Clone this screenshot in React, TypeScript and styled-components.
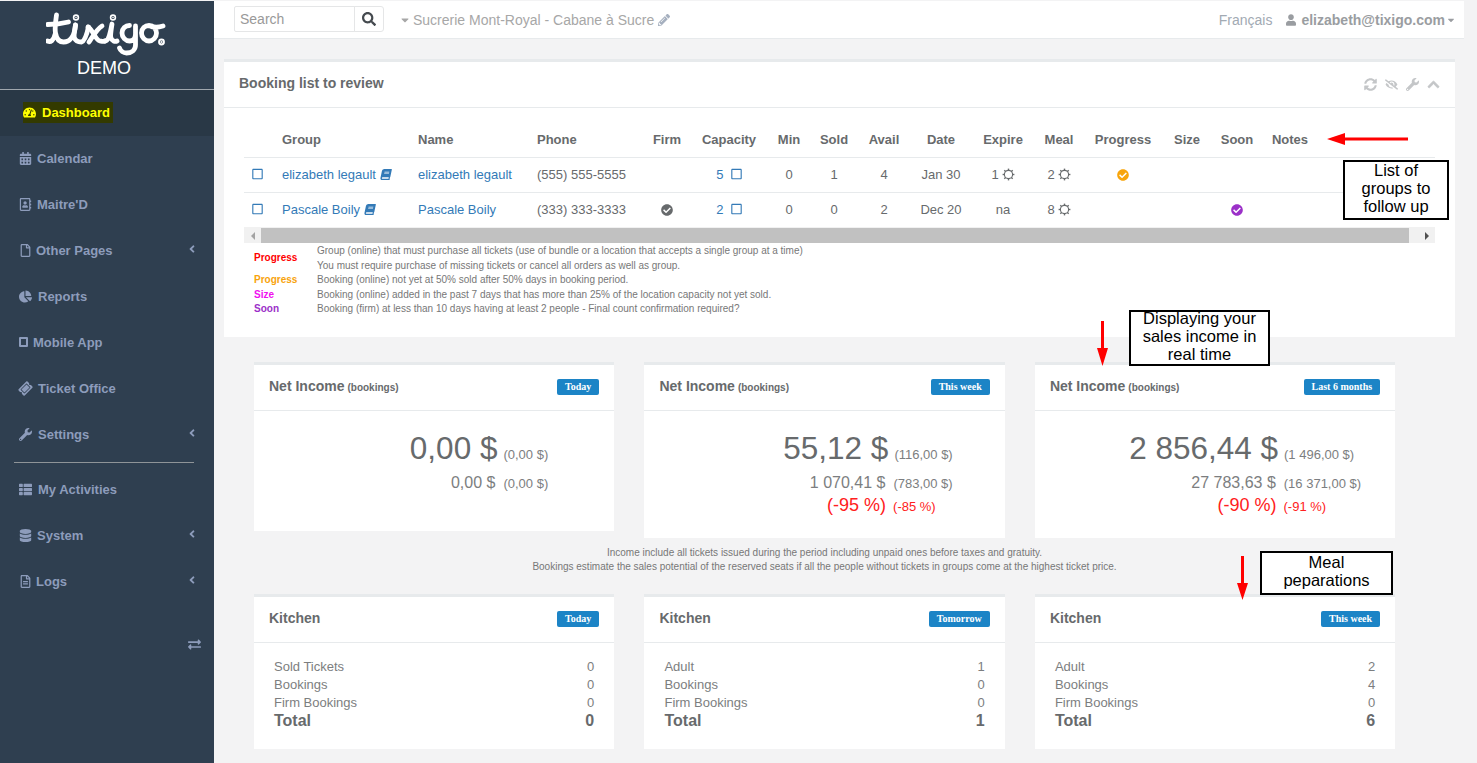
import React from 'react';
import styled, { createGlobalStyle } from 'styled-components';
import {
  FaTachometerAlt, FaCalendarAlt, FaRegAddressBook, FaRegFile, FaChartPie, FaRegSquare, FaTicketAlt, FaWrench,
  FaThList, FaDatabase, FaRegFileAlt, FaExchangeAlt, FaAngleLeft, FaSearch, FaCaretDown, FaPencilAlt, FaUser,
  FaSyncAlt, FaEyeSlash, FaChevronUp, FaBook, FaCheckCircle,
} from 'react-icons/fa';

const Global = createGlobalStyle`
  html, body { margin: 0; padding: 0; height: 763px; overflow: hidden; background: #f3f3f4; }
  body { font-family: "Liberation Sans", Arial, sans-serif; font-size: 13px; color: #676a6c; }
  * { box-sizing: border-box; }
`;

const Page = styled.div`
  position: relative;
  display: flex;
  width: 1477px;
  height: 763px;
  overflow: hidden;
  padding-top: 1px;
`;

const Sidebar = styled.nav`
  width: 214px;
  flex: none;
  background: #2f3f50;
  display: flex;
  flex-direction: column;
`;

const Brand = styled.div`
  height: 89px;
  display: flex;
  flex-direction: column;
  align-items: center;
  color: #fff;
  border-bottom: 1px solid #a0a7ae;
`;

const Logo = styled.svg`
  width: 124px;
  height: 46px;
  margin: 11px 0 0 1px;
  display: block;
`;

const DemoText = styled.div`
  font-size: 18px;
  line-height: 18px;
  margin: 1px 6px 0 0;
`;

const ActiveItem = styled.div`
  height: 46px;
  background: #293846;
  display: flex;
  align-items: center;
  padding: 0 0 2px 23px;
`;

const Highlight = styled.span`
  display: flex;
  align-items: center;
  gap: 6px;
  height: 21px;
  padding: 0 3px 0 0;
  background: #333a00;
  color: #ffff00;
  font-weight: 700;
  font-size: 13px;
  svg { width: 13px; height: 13px; }
`;

const NavItem = styled.div`
  height: 46px;
  display: flex;
  align-items: center;
  padding: 0 19px 2px;
  color: #8d9cbb;
  font-weight: 700;
  font-size: 13px;
  flex: none;
`;

const NavIcon = styled.span<{ $w: number }>`
  width: ${(p) => p.$w}px;
  flex: none;
  display: flex;
  align-items: center;
  svg { width: 13px; height: 13px; }
`;

const MobileIcon = styled.span`
  display: block;
  width: 9px;
  height: 10px;
  border: 2px solid #8d9cbb;
  border-radius: 1px;
`;

const TicketIcon = styled(FaTicketAlt)`
  transform: rotate(-45deg);
`;

const Chevron = styled(FaAngleLeft)`
  margin-left: auto;
  width: 12px;
  height: 12px;
  margin-top: -2px;
  margin-right: -3px;
`;

const NavRule = styled.div`
  height: 1px;
  margin: 4px 20px 4px 14px;
  background: #8f9498;
`;

const Toggle = styled.div`
  margin-top: 33px;
  padding-right: 13px;
  display: flex;
  justify-content: flex-end;
  color: #8d9cbb;
  svg { width: 13px; height: 13px; }
`;

const Main = styled.main`
  flex: none;
  width: 1250px;
  display: flex;
  flex-direction: column;
`;

const TopBar = styled.header`
  height: 38px;
  background: #fff;
  border-bottom: 1px solid #e7eaec;
  display: flex;
  align-items: center;
  padding: 0 9px 0 20px;
  flex: none;
`;

const SearchInput = styled.div`
  width: 121px;
  height: 26px;
  border: 1px solid #e5e6e7;
  border-radius: 2px 0 0 2px;
  color: #999;
  font-size: 14px;
  line-height: 24px;
  padding-left: 5px;
  margin-top: -1px;
`;

const SearchButton = styled.div`
  width: 30px;
  height: 26px;
  margin-left: -1px;
  border: 1px solid #e5e6e7;
  border-radius: 0 3px 3px 0;
  display: flex;
  align-items: center;
  justify-content: center;
  color: #454a4f;
  margin-top: -1px;
  svg { width: 14px; height: 14px; }
`;

const Venue = styled.div`
  margin-left: 16px;
  display: flex;
  align-items: center;
  color: #a7a7a7;
  font-size: 14px;
  svg { color: #a7a7a7; }
`;

const VenueCaret = styled(FaCaretDown)`
  width: 10px;
  height: 12px;
  margin-right: 3px;
`;

const VenuePencil = styled(FaPencilAlt)`
  width: 12px;
  height: 12px;
  margin-left: 4px;
  color: #a6b0bf !important;
`;

const RightTools = styled.div`
  margin-left: auto;
  display: flex;
  align-items: center;
  font-size: 14px;
  color: #a2aab3;
`;

const UserName = styled.span`
  display: flex;
  align-items: center;
  margin-left: 14px;
  color: #9a9da1;
  font-weight: 700;
  svg { width: 10px; height: 12px; margin-right: 5px; }
`;

const UserCaret = styled(FaCaretDown)`
  width: 8px !important;
  height: 10px !important;
  margin: 0 0 0 2px !important;
`;

const Content = styled.div`
  flex: 1;
  padding: 20px 9px 0 10px;
  display: flex;
  flex-direction: column;
`;

const Panel = styled.section`
  width: 1231px;
  height: 278px;
  background: #fff;
  border-top: 3px solid #e7eaec;
  flex: none;
`;

const PanelHead = styled.div`
  height: 46px;
  border-bottom: 1px solid #e7eaec;
  display: flex;
  align-items: center;
  justify-content: space-between;
  padding: 0 15px;
`;

const PanelTitle = styled.h5`
  margin: -4px 0 0;
  font-size: 14px;
  font-weight: 700;
  color: #676a6c;
  letter-spacing: 0;
`;

const PanelTools = styled.div`
  display: flex;
  align-items: center;
  gap: 8px;
  color: #c4c6c8;
  svg { width: 13px; height: 13px; }
`;

const CollapseIcon = styled(FaChevronUp)`
  stroke: currentColor;
  stroke-width: 30;
`;

const TableArea = styled.div`
  margin: 14px 20px 0;
`;

const Table = styled.table`
  border-collapse: collapse;
  table-layout: fixed;
  width: 1191px;
  font-size: 13px;
  th {
    height: 35px;
    font-weight: 700;
    font-size: 13px;
    color: #676a6c;
    text-align: center;
    padding: 0;
    border-bottom: 1px solid #e7eaec;
  }
  td {
    height: 35px;
    padding: 0;
    text-align: center;
    color: #676a6c;
    border-bottom: 1px solid #e7eaec;
    white-space: nowrap;
  }
  tr:last-child td { border-bottom: 0; }
`;

const LeftTh = styled.th`
  && { text-align: left; padding-left: 8px; }
`;
const LeftTd = styled.td`
  && { text-align: left; padding-left: 8px; }
`;
const BoxTd = styled.td`
  && { padding-right: 4px; }
`;

const Link = styled.a`
  color: #337ab7;
`;

const BookIcon = styled(FaBook)`
  width: 12px;
  height: 11px;
  margin-left: 4px;
  vertical-align: -1px;
  color: #337ab7;
  transform: skewX(-12deg);
`;

const CheckBox = styled(FaRegSquare)`
  width: 11px;
  height: 12px;
  color: #337ab7;
  vertical-align: -1px;
`;

const SunSvg = styled.svg`
  width: 13px;
  height: 13px;
  vertical-align: -2px;
  margin-left: 3px;
  color: #676a6c;
`;

function Sun() {
  const teeth = [0, 45, 90, 135, 180, 225, 270, 315];
  return (
    <SunSvg viewBox="0 0 13 13" fill="none" stroke="currentColor">
      <circle cx="6.5" cy="6.5" r="4.1" strokeWidth="1.1" />
      {teeth.map((a) => <path key={a} d="M6.5 0.6v1.8" strokeWidth="1.4" transform={`rotate(${a} 6.5 6.5)`} />)}
    </SunSvg>
  );
}

const CheckDot = styled(FaCheckCircle)<{ $c: string }>`
  width: 12px;
  height: 12px;
  vertical-align: -2px;
  color: ${(p) => p.$c};
`;

const ScrollBar = styled.div`
  height: 16px;
  background: #f1f1f1;
  display: flex;
  align-items: stretch;
  padding-top: 1px;
`;

const ScrollArrow = styled.span<{ $dir: 'l' | 'r' }>`
  width: 17px;
  flex: none;
  display: flex;
  align-items: center;
  justify-content: center;
  &::before {
    content: '';
    border-top: 4px solid transparent;
    border-bottom: 4px solid transparent;
    ${(p) => (p.$dir === 'l' ? 'border-right: 4px solid #a3a3a3;' : 'border-left: 4px solid #505050;')}
  }
`;

const ScrollThumb = styled.div`
  flex: 1;
  margin-right: 9px;
  background: #c1c1c1;
`;

const Legend = styled.div`
  display: grid;
  grid-template-columns: 63px 1fr;
  margin: 1px 20px 0 30px;
  font-size: 10px;
  line-height: 14.5px;
  color: #777;
`;

const LegendKey = styled.div<{ $c: string; $span?: number }>`
  color: ${(p) => p.$c};
  font-weight: 700;
  ${(p) => (p.$span ? `grid-row: span ${p.$span}; align-self: center;` : '')}
`;

const CardRow = styled.div<{ $top?: number }>`
  display: grid;
  grid-template-columns: repeat(3, 360.25px);
  column-gap: 30.2px;
  align-items: start;
  margin: ${(p) => p.$top ?? 0}px 0 0 30px;
`;

const Card = styled.article<{ $h: number }>`
  height: ${(p) => p.$h}px;
  background: #fff;
  border-top: 3px solid #e7eaec;
`;

const CardHead = styled.div`
  height: 46px;
  border-bottom: 1px solid #e7eaec;
  display: flex;
  align-items: center;
  justify-content: space-between;
  padding: 0 15px;
`;

const CardTitle = styled.h5`
  margin: -3px 0 0;
  font-size: 14px;
  font-weight: 700;
  color: #676a6c;
`;

const CardSub = styled.small`
  font-size: 10px;
  font-weight: 700;
  margin-left: 3px;
`;

const Badge = styled.span`
  font-family: "Liberation Serif", "Times New Roman", serif;
  font-size: 10px;
  font-weight: 700;
  color: #fff;
  background: #1c84c6;
  border-radius: 2px;
  height: 16px;
  line-height: 16px;
  padding: 0 8px;
  margin-top: -1px;
`;

const Figures = styled.div`
  display: grid;
  justify-items: end;
  padding-top: 18px;
`;

const Line = styled.div<{ $right: number; $top?: number }>`
  display: flex;
  align-items: baseline;
  margin: ${(p) => p.$top ?? 0}px ${(p) => p.$right}px 0 0;
  white-space: nowrap;
`;

const Big = styled.span`
  font-size: 31.5px;
  line-height: 38px;
  color: #676a6c;
`;

const Mid = styled.span`
  font-size: 16px;
  line-height: 26px;
  color: #7c7e80;
`;

const RedMid = styled.span`
  font-size: 18px;
  line-height: 26px;
  color: #ff2020;
`;

const Paren = styled.span<{ $red?: boolean; $gap: number }>`
  font-size: 13px;
  margin-left: ${(p) => p.$gap}px;
  color: ${(p) => (p.$red ? '#ff2020' : '#7c7e80')};
`;

const Notice = styled.div`
  height: 56px;
  padding-top: 8px;
  text-align: center;
  font-size: 10px;
  line-height: 14px;
  color: #777;
  margin-left: 30px;
  width: 1141px;
`;

const KitchenBody = styled.div`
  padding: 15px 20px 0;
  font-size: 13px;
  line-height: 18px;
  color: #7c7e80;
`;

const KRow = styled.div`
  display: flex;
  justify-content: space-between;
`;

const KTotal = styled(KRow)`
  font-size: 16px;
  font-weight: 700;
  color: #676a6c;
`;

const Note = styled.div<{ $x: number; $y: number; $w: number; $h: number; $dy: number }>`
  position: absolute;
  left: ${(p) => p.$x}px;
  top: ${(p) => p.$y}px;
  width: ${(p) => p.$w}px;
  height: ${(p) => p.$h}px;
  border: 2px solid #000;
  background: #fff;
  color: #000;
  font-size: 16.5px;
  line-height: 18px;
  text-align: center;
  overflow: hidden;
  & > span { display: block; margin-top: ${(p) => p.$dy}px; }
`;

const Arrow = styled.svg<{ $x: number; $y: number }>`
  position: absolute;
  left: ${(p) => p.$x}px;
  top: ${(p) => p.$y}px;
`;

type Item = [React.ReactNode, number, string, boolean];

const items: Item[] = [
  [<FaCalendarAlt />, 18, 'Calendar', false],
  [<FaRegAddressBook />, 18, "Maitre'D", false],
  [<FaRegFile />, 17, 'Other Pages', true],
  [<FaChartPie />, 19, 'Reports', false],
  [<MobileIcon />, 14, 'Mobile App', false],
  [<TicketIcon />, 19, 'Ticket Office', false],
  [<FaWrench />, 19, 'Settings', true],
];
const items2: Item[] = [
  [<FaThList />, 19, 'My Activities', false],
  [<FaDatabase />, 18, 'System', true],
  [<FaRegFileAlt />, 17, 'Logs', true],
];

const cols = [30, 136, 119, 116, 44, 80, 40, 50, 50, 64, 60, 52, 76, 52, 48, 58, 116];
const heads = ['Firm', 'Capacity', 'Min', 'Sold', 'Avail', 'Date', 'Expire', 'Meal', 'Progress', 'Size', 'Soon', 'Notes'];

function NavRow({ it }: { it: Item }) {
  return (
    <NavItem>
      <NavIcon $w={it[1]}>{it[0]}</NavIcon>
      {it[2]}
      {it[3] && <Chevron />}
    </NavItem>
  );
}

function Income(props: { badge: string; h: number; big: string; bigP: string; mid: string; midP: string; red?: string; redP?: string; right: number; rightMid: number; rightRed?: number; }) {
  return (
    <Card $h={props.h}>
      <CardHead>
        <CardTitle>Net Income<CardSub>(bookings)</CardSub></CardTitle>
        <Badge>{props.badge}</Badge>
      </CardHead>
      <Figures>
        <Line $right={props.right}><Big>{props.big}</Big><Paren $gap={6}>{props.bigP}</Paren></Line>
        <Line $right={props.rightMid} $top={3}><Mid>{props.mid}</Mid><Paren $gap={8}>{props.midP}</Paren></Line>
        {props.red && <Line $right={props.rightRed ?? 0} $top={-4}><RedMid>{props.red}</RedMid><Paren $red $gap={7}>{props.redP}</Paren></Line>}
      </Figures>
    </Card>
  );
}

function Kitchen(props: { badge: string; first: string; vals: number[] }) {
  return (
    <Card $h={155}>
      <CardHead>
        <CardTitle>Kitchen</CardTitle>
        <Badge>{props.badge}</Badge>
      </CardHead>
      <KitchenBody>
        <KRow><span>{props.first}</span><span>{props.vals[0]}</span></KRow>
        <KRow><span>Bookings</span><span>{props.vals[1]}</span></KRow>
        <KRow><span>Firm Bookings</span><span>{props.vals[2]}</span></KRow>
        <KTotal><span>Total</span><span>{props.vals[3]}</span></KTotal>
      </KitchenBody>
    </Card>
  );
}

export default function App() {
  return (
    <Page>
      <Global />
      <Sidebar>
        <Brand>
          <Logo viewBox="0 0 124 46" fill="none" stroke="#fff" strokeWidth="4.8" strokeLinecap="round" strokeLinejoin="round">
            <path d="M1.5 29c3 1.5 6 0 8-8M10.5 3c-1 7-2 13-1 18 1 6 4 9 8 9 6 0 11-5 12-17" />
            <path d="M1.5 12.5c7 0 15-1 21-2.5" />
            <path d="M29.500 13c-1 6-2 11-1 13 1 3 4 4 7 4 3-1 5-6 7-15" />
            <path d="M42 15c4 1 7 13 12 14 1 0 3 1 5 0M56 14c-5 3-9 10-13 16" />
            <path d="M59 29c3 0 5-6 7-17-1 7-2 12-1 14 1 3 4 4 6 3" />
            <path d="M83.500 13.500c-4 0-7.500 3-7.500 7.500s3.500 8 7.500 8 6-3 6-7M89.500 14v19c0 5-4 8-9 8-3 0-6-2-7-5" />
            <path d="M103 13.500c-4 0-7.500 3-7.500 7.500s3.500 8 7.500 8 7.500-3.500 7.500-8c0-4-3-7.500-7.500-7.500 4 2 9 2 14 .5" />
            <circle cx="115.500" cy="30" r="1" fill="#fff" />
            <circle cx="30" cy="5.500" r="0.8" fill="#fff" />
            <circle cx="67" cy="5.500" r="0.8" fill="#fff" />
          </Logo>
          <DemoText>DEMO</DemoText>
        </Brand>
        <ActiveItem>
          <Highlight><FaTachometerAlt />Dashboard</Highlight>
        </ActiveItem>
        {items.map((it) => <NavRow key={it[2]} it={it} />)}
        <NavRule />
        {items2.map((it) => <NavRow key={it[2]} it={it} />)}
        <Toggle><FaExchangeAlt /></Toggle>
      </Sidebar>
      <Main>
        <TopBar>
          <SearchInput>Search</SearchInput>
          <SearchButton><FaSearch /></SearchButton>
          <Venue>
            <VenueCaret />
            Sucrerie Mont-Royal - Cabane à Sucre
            <VenuePencil />
          </Venue>
          <RightTools>
            Français
            <UserName><FaUser />elizabeth@tixigo.com<UserCaret /></UserName>
          </RightTools>
        </TopBar>
        <Content>
          <Panel>
            <PanelHead>
              <PanelTitle>Booking list to review</PanelTitle>
              <PanelTools><FaSyncAlt /><FaEyeSlash /><FaWrench /><CollapseIcon /></PanelTools>
            </PanelHead>
            <TableArea>
              <Table>
                <colgroup>
                  {cols.map((w, i) => <col key={i} style={{ width: w }} />)}
                </colgroup>
                <thead>
                  <tr>
                    <th />
                    <LeftTh>Group</LeftTh>
                    <LeftTh>Name</LeftTh>
                    <LeftTh>Phone</LeftTh>
                    {heads.map((h) => <th key={h}>{h}</th>)}
                    <th />
                  </tr>
                </thead>
                <tbody>
                  <tr>
                    <BoxTd><CheckBox /></BoxTd>
                    <LeftTd><Link>elizabeth legault</Link><BookIcon /></LeftTd>
                    <LeftTd><Link>elizabeth legault</Link></LeftTd>
                    <LeftTd>(555) 555-5555</LeftTd>
                    <td />
                    <td><Link>5</Link> &nbsp;<CheckBox /></td>
                    <td>0</td><td>1</td><td>4</td><td>Jan 30</td>
                    <td>1<Sun /></td>
                    <td>2<Sun /></td>
                    <td><CheckDot $c="#f8a50c" /></td>
                    <td /><td /><td /><td />
                  </tr>
                  <tr>
                    <BoxTd><CheckBox /></BoxTd>
                    <LeftTd><Link>Pascale Boily</Link><BookIcon /></LeftTd>
                    <LeftTd><Link>Pascale Boily</Link></LeftTd>
                    <LeftTd>(333) 333-3333</LeftTd>
                    <td><CheckDot $c="#676a6c" /></td>
                    <td><Link>2</Link> &nbsp;<CheckBox /></td>
                    <td>0</td><td>0</td><td>2</td><td>Dec 20</td>
                    <td>na</td>
                    <td>8<Sun /></td>
                    <td /><td />
                    <td><CheckDot $c="#9b30c8" /></td>
                    <td /><td />
                  </tr>
                </tbody>
              </Table>
              <ScrollBar>
                <ScrollArrow $dir="l" />
                <ScrollThumb />
                <ScrollArrow $dir="r" />
              </ScrollBar>
            </TableArea>
            <Legend>
              <LegendKey $c="#ff0000" $span={2}>Progress</LegendKey>
              <div>Group (online) that must purchase all tickets (use of bundle or a location that accepts a single group at a time)</div>
              <div>You must require purchase of missing tickets or cancel all orders as well as group.</div>
              <LegendKey $c="#f8a30c">Progress</LegendKey>
              <div>Booking (online) not yet at 50% sold after 50% days in booking period.</div>
              <LegendKey $c="#f010f0">Size</LegendKey>
              <div>Booking (online) added in the past 7 days that has more than 25% of the location capacity not yet sold.</div>
              <LegendKey $c="#9b30c8">Soon</LegendKey>
              <div>Booking (firm) at less than 10 days having at least 2 people - Final count confirmation required?</div>
            </Legend>
          </Panel>
          <CardRow $top={25}>
            <Income badge="Today" h={169} big="0,00 $" bigP="(0,00 $)" mid="0,00 $" midP="(0,00 $)" right={66} rightMid={66} />
            <Income badge="This week" h={176} big="55,12 $" bigP="(116,00 $)" mid="1 070,41 $" midP="(783,00 $)" red="(-95 %)" redP="(-85 %)" right={52} rightMid={52} rightRed={69} />
            <Income badge="Last 6 months" h={176} big="2 856,44 $" bigP="(1 496,00 $)" mid="27 783,63 $" midP="(16 371,00 $)" red="(-90 %)" redP="(-91 %)" right={41} rightMid={34} rightRed={69} />
          </CardRow>
          <Notice>
            Income include all tickets issued during the period including unpaid ones before taxes and gratuity.<br />
            Bookings estimate the sales potential of the reserved seats if all the people without tickets in groups come at the highest ticket price.
          </Notice>
          <CardRow>
            <Kitchen badge="Today" first="Sold Tickets" vals={[0, 0, 0, 0]} />
            <Kitchen badge="Tomorrow" first="Adult" vals={[1, 0, 0, 1]} />
            <Kitchen badge="This week" first="Adult" vals={[2, 4, 0, 6]} />
          </CardRow>
        </Content>
      </Main>
      <Arrow $x={1327} $y={133} width={81} height={12} viewBox="0 0 81 12"><path d="M81 4.500H18V0L0 6l18 6V7.500h63z" fill="#f00" /></Arrow>
      <Arrow $x={1097} $y={321} width={11} height={45} viewBox="0 0 11 45"><path d="M4 0h3v27h4L5.500 45 0 27h4z" fill="#f00" /></Arrow>
      <Arrow $x={1237} $y={556} width={11} height={44} viewBox="0 0 11 44"><path d="M4 0h3v27h4L5.500 44 0 27h4z" fill="#f00" /></Arrow>
      <Note $x={1343} $y={160} $w={106} $h={60} $dy={-1}><span>List of<br />groups to<br />follow up</span></Note>
      <Note $x={1129} $y={310} $w={141} $h={56} $dy={-3}><span>Displaying your<br />sales income in<br />real time</span></Note>
      <Note $x={1260} $y={551} $w={133} $h={44} $dy={0}><span>Meal<br />peparations</span></Note>
    </Page>
  );
}
